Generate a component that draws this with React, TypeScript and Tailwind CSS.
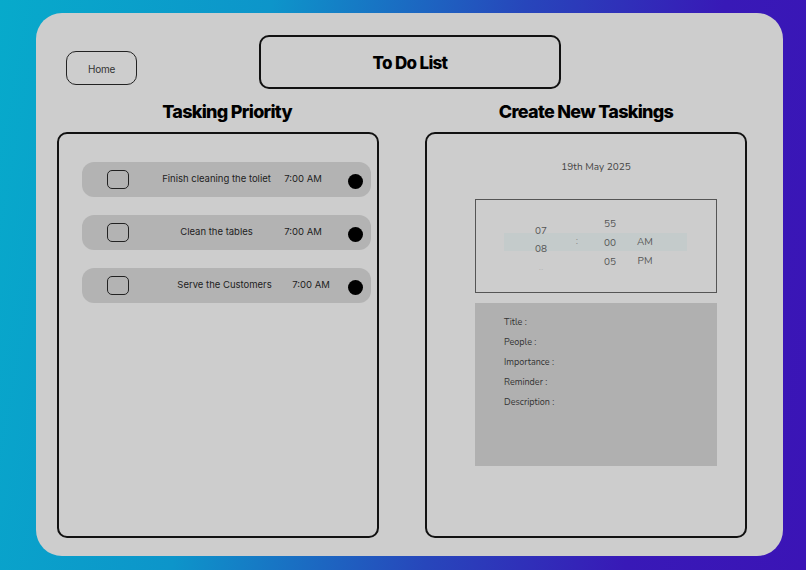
import React from "react";

const tasks = [
  { title: "Finish cleaning the toliet", time: "7:00 AM", shift: "ml-[21px]" },
  { title: "Clean the tables", time: "7:00 AM", shift: "ml-[21px]" },
  { title: "Serve the Customers", time: "7:00 AM", shift: "ml-[29px]" },
];

const fields = ["Title :", "People :", "Importance :", "Reminder :", "Description :"];

function TaskRow({ title, time, shift }: { title: string; time: string; shift: string }) {
  return (
    <div className="flex h-[35px] w-[289px] items-center rounded-[12px] bg-[#b3b3b3] text-[9.5px] text-[#222]">
      {/* checkbox */}
      <div className="ml-[25px] h-[19px] w-[22px] shrink-0 rounded-[5px] border-[1.5px] border-[#222]" />
      <span className={`${shift} w-[133px] shrink-0 text-center`}>{title}</span>
      <span className="w-[40px] shrink-0 text-center">{time}</span>
      <div className="ml-auto mr-[8px] mt-[3px] h-[15px] w-[15px] shrink-0 rounded-full bg-black" />
    </div>
  );
}

function TimePicker() {
  return (
    <div className="relative mt-[25px] flex h-[94px] w-[242px] items-start border border-[#555] text-[10px] leading-none text-[#555]">
      {/* selected band */}
      <div className="absolute left-[28px] top-[33px] h-[18px] w-[183px] bg-[#c4cbcb]" />
      <div className="relative ml-[55px] flex w-[20px] flex-col items-center pt-[22px] leading-[18px]">
        <span>07</span>
        <span>08</span>
        <span className="text-[#b5b5b5]">..</span>
      </div>
      <div className="relative ml-[24px] w-[4px] pt-[34px] text-center leading-[14px] text-[#888]">:</div>
      <div className="relative ml-[21px] flex w-[20px] flex-col items-center pt-[15px] leading-[19px]">
        <span>55</span>
        <span>00</span>
        <span>05</span>
      </div>
      <div className="relative ml-[15px] flex w-[20px] flex-col items-center pt-[33px] leading-[19px]">
        <span>AM</span>
        <span>PM</span>
      </div>
    </div>
  );
}

export default function App() {
  return (
    <div className="h-[570px] w-[806px] overflow-hidden bg-[linear-gradient(100deg,#07aacb_0%,#0d95ca_30%,#2746bb_58%,#3819b7_80%,#3b14b6_100%)] pl-[36px] pt-[13px] font-['Inter',sans-serif]">
      <div className="flex h-[543px] w-[747px] flex-col rounded-[26px] bg-[#cdcdcd]">
        {/* Header */}
        <div className="flex items-start pt-[22px]">
          <button className="ml-[30px] mt-[16px] flex h-[34px] w-[71px] items-center justify-center rounded-[10px] border-[1.5px] border-[#222] pt-[2px] text-[10px] tracking-tight text-[#333]">
            Home
          </button>
          <div className="ml-[122px] flex h-[54px] w-[302px] items-center justify-center rounded-[10px] border-2 border-[#111] pt-[3px]">
            <h1 className="text-[17px] font-extrabold tracking-[-0.04em] text-black">To Do List</h1>
          </div>
        </div>

        {/* Section titles */}
        <div className="mt-[12px] flex pl-[21px] text-[18px] font-extrabold leading-[22px] tracking-[-0.04em] text-black">
          <h2 className="w-[322px] pl-[18px] text-center">Tasking Priority</h2>
          <h2 className="ml-[46px] w-[322px] text-center">Create New Taskings</h2>
        </div>

        {/* Panels */}
        <div className="mt-[9px] flex gap-[46px] pl-[21px]">
          <div className="flex h-[406px] w-[322px] flex-col gap-[18px] rounded-[10px] border-2 border-[#111] pl-[23px] pt-[28px]">
            {tasks.map((t) => (
              <TaskRow key={t.title} {...t} />
            ))}
          </div>

          <div className="h-[406px] w-[322px] rounded-[10px] border-2 border-[#111] font-['Nunito','Lato',sans-serif]">
            <div className="ml-[48px] flex w-[242px] flex-col pt-[26px]">
              <p className="text-center text-[10px] leading-[14px] text-[#444]">19th May 2025</p>
              <TimePicker />
              <div className="mt-[10px] h-[163px] w-[242px] bg-[#b0b0b0] pl-[29px] pt-[9px] text-[9px] text-[#333]">
                {fields.map((f) => (
                  <p key={f} className="h-[20px] leading-[20px]">
                    {f}
                  </p>
                ))}
              </div>
            </div>
          </div>
        </div>
      </div>
    </div>
  );
}
